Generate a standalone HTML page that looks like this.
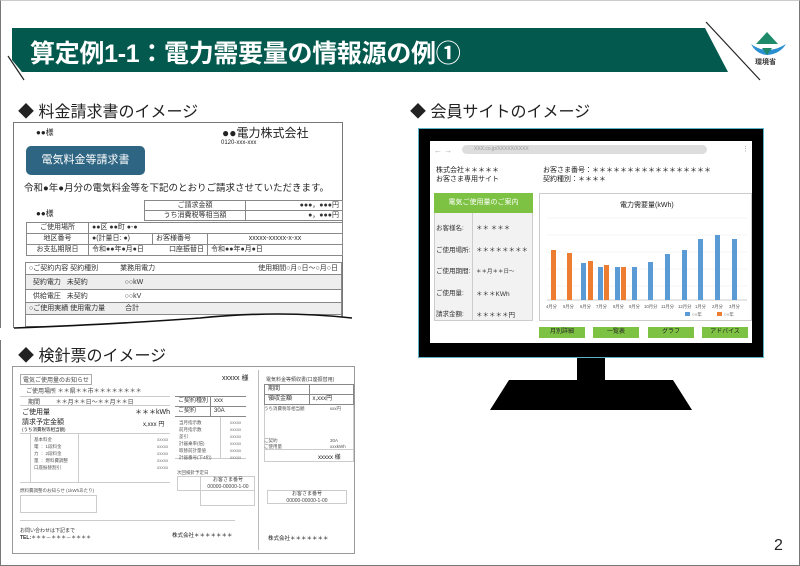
<!DOCTYPE html>
<html><head><meta charset="utf-8"><style>
*{margin:0;padding:0;box-sizing:border-box}
body{width:800px;height:566px;position:relative;overflow:hidden;background:#fff;font-family:"Liberation Sans","Noto Sans CJK JP",sans-serif;color:#222}
.a{position:absolute;white-space:nowrap}
.t{position:absolute;border-collapse:collapse;font-size:7px;color:#333;table-layout:fixed}
.t td{border:1px solid #888;padding:0 3px;height:10px;line-height:9px;white-space:nowrap;overflow:hidden}
.t2 td{height:11px;line-height:10px}
.s{font-size:6px;color:#444}
</style></head><body>
<div class="a" style="left:0;top:0;width:800px;height:566px;border:1px solid #777;border-top-color:#ccc"></div>
<!-- header -->
<svg class="a" style="left:0;top:0" width="800" height="90">
<polygon points="12,28 705,28 728,72 22,72 12,60" fill="#03594d"/>
<line x1="706" y1="22" x2="760" y2="80" stroke="#222" stroke-width="1.2"/>
<line x1="8" y1="56" x2="24" y2="80" stroke="#222" stroke-width="1.2"/>
<polygon points="767,32 778,44 756,44" fill="#1e8a6a"/>
<path d="M751,44 Q767,56 786,44 Q780,54 767,55 Q756,54 751,44Z" fill="#2a8fd0"/>
<path d="M762,48 L772,48 L767,55Z" fill="#1e8a6a"/>
</svg>
<div class="a" style="left:30px;top:34px;font-size:25px;font-weight:bold;color:#fff;letter-spacing:-0.3px">算定例1-1：電力需要量の情報源の例①</div>
<div class="a" style="left:755px;top:57px;font-size:7px;font-weight:bold;color:#333">環境省</div>
<div class="a" style="left:18px;top:98px;font-size:16px">◆ 料金請求書のイメージ</div>
<div class="a" style="left:410px;top:98px;font-size:16px">◆ 会員サイトのイメージ</div>
<div class="a" style="left:18px;top:342px;font-size:16px">◆ 検針票のイメージ</div>

<!-- bill -->
<div class="a" style="left:13px;top:122px;width:330px;height:210px;border:1px solid #777;border-bottom:none"></div>
<div class="a" style="left:36px;top:127px;font-size:8px">●●様</div>
<div class="a" style="left:222px;top:124px;font-size:12px">●●電力株式会社</div>
<div class="a" style="left:221px;top:140px;font-size:6px">0120-xxx-xxx</div>
<div class="a" style="left:26px;top:146px;width:119px;height:29px;background:#2e6583;border-radius:5px;color:#fff;font-size:11px;text-align:center;line-height:29px">電気料金等請求書</div>
<div class="a" style="left:24px;top:180px;font-size:9.5px">令和●年●月分の電気料金等を下記のとおりご請求させていただきます。</div>
<div class="a" style="left:36px;top:208px;font-size:8px">●●様</div>
<table class="t" style="left:144px;top:200px;width:199px"><tr><td style="text-align:center;width:101px">ご請求金額</td><td style="text-align:right">●●●，●●●円</td></tr><tr><td style="text-align:center">うち消費税等相当額</td><td style="text-align:right">●，●●●円</td></tr></table>
<table class="t t2" style="left:26px;top:222px;width:317px"><tr><td style="text-align:center;width:62px">ご使用場所</td><td style="width:64px;border-right:none">●●区 ●●町 ●-●</td><td style="width:55px;border-left:none;border-right:none"></td><td style="border-left:none"></td></tr><tr><td style="text-align:center">地区番号</td><td>●(計量日: ●)</td><td>お客様番号</td><td style="text-align:center">xxxxx-xxxxx-x-xx</td></tr><tr><td style="text-align:center">お支払期限日</td><td style="border-right:none">令和●●年●月●日</td><td style="border-left:none;text-align:right">口座振替日</td><td>令和●●年●月●日</td></tr></table>
<table class="t" style="left:25px;top:262px;width:317px"><tr><td style="height:12px">○ご契約内容 契約種別 <span style="margin-left:20px">業務用電力</span><span style="float:right">使用期間○月○日～○月○日</span></td></tr><tr style="background:#eee"><td style="height:15px">&nbsp;&nbsp;契約電力 &nbsp;&nbsp;未契約 <span style="margin-left:35px">○○kW</span></td></tr><tr><td style="height:13px">&nbsp;&nbsp;供給電圧 &nbsp;&nbsp;未契約 <span style="margin-left:35px">○○kV</span></td></tr><tr style="background:#eee"><td style="height:12px">○ご使用実績 使用電力量 <span style="margin-left:18px">合計</span></td></tr><tr><td style="height:12px"></td></tr></table>
<svg class="a" style="left:0;top:300px" width="360" height="40"><path d="M0,40 L0,28 L14,28 Q120,24 200,18 Q280,10 352,18 L360,18 L360,40Z" fill="#fff"/><path d="M14,28 Q120,24 200,18 Q280,10 352,18" stroke="#111" stroke-width="1.6" fill="none"/></svg>

<!-- monitor -->
<div class="a" style="left:418px;top:128px;width:346px;height:230px;background:#000;border:1px solid #5ab4c8"></div>
<div class="a" style="left:577px;top:358px;width:28px;height:22px;background:#000"></div>
<svg class="a" style="left:480px;top:379px" width="230" height="33"><polygon points="29,1 193,1 212,31 10,31" fill="#000"/></svg>
<div class="a" style="left:430px;top:141px;width:322px;height:202px;background:#fff"></div>
<div class="a" style="left:434px;top:146px;font-size:8px;color:#aaa">← →</div>
<div class="a" style="left:462px;top:145px;width:245px;height:9px;background:#ddd;border-radius:5px;font-size:5px;color:#999;padding-left:12px;line-height:9px">XXX.co.jp/XXXXX/XXXX</div>
<div class="a" style="left:742px;top:145px;font-size:7px;color:#999">⋮</div>
<div class="a" style="left:436px;top:166px;font-size:7px;line-height:9px">株式会社＊＊＊＊＊<br>お客さま専用サイト</div>
<div class="a" style="left:543px;top:166px;font-size:7px;line-height:9px">お客さま番号：＊＊＊＊＊＊＊＊＊＊＊＊＊＊＊＊＊<br>契約種別：＊＊＊＊</div>
<div class="a" style="left:434px;top:193px;width:99px;height:128px;border:1px solid #ccc;background:#f2f2f2"></div>
<div class="a" style="left:434px;top:193px;width:99px;height:20px;background:#7dc242;color:#fff;font-size:7px;text-align:center;line-height:20px">電気ご使用量のご案内</div>
<div class="a" style="left:472px;top:213px;width:1px;height:108px;background:#ccc"></div>
<div class="a" style="left:436px;top:218px;font-size:6.5px;line-height:21.5px;color:#333">お客様名:<br>ご使用場所:<br>ご使用期間:<br>ご使用量:<br>請求金額:</div>
<div class="a" style="left:476px;top:218px;font-size:6.5px;line-height:21.5px;color:#333">＊＊ ＊＊＊<br>＊＊＊＊＊＊＊＊<br><span style="font-size:5.5px">＊＊月＊＊日～</span><br>＊＊＊KWh<br>＊＊＊＊＊円</div>
<div class="a" style="left:539px;top:193px;width:213px;height:128px;border:1px solid #ccc"></div>
<div class="a" style="left:620px;top:200px;font-size:7px">電力需要量(kWh)</div>
<svg class="a" style="left:539px;top:212px" width="213" height="108">
<g stroke="#eee" stroke-width="0.6"><line x1="8" x2="208" y1="6" y2="6"/><line x1="8" x2="208" y1="23" y2="23"/><line x1="8" x2="208" y1="40" y2="40"/><line x1="8" x2="208" y1="57" y2="57"/><line x1="8" x2="208" y1="74" y2="74"/></g>
<line x1="8" x2="208" y1="88" y2="88" stroke="#ccc"/>
<g fill="#ed7d31"><rect x="12" y="38" width="5" height="50"/><rect x="28" y="41" width="5" height="47"/><rect x="49" y="49" width="5" height="39"/><rect x="65" y="53" width="5" height="35"/><rect x="82" y="55" width="5" height="33"/></g>
<g fill="#5b9bd5"><rect x="42" y="51" width="5" height="37"/><rect x="59" y="55" width="5" height="33"/><rect x="76" y="55" width="5" height="33"/><rect x="93" y="55" width="5" height="33"/><rect x="109" y="50" width="5" height="38"/><rect x="126" y="42" width="5" height="46"/><rect x="143" y="38" width="5" height="50"/><rect x="159" y="27" width="5" height="61"/><rect x="176" y="23" width="5" height="65"/><rect x="193" y="27" width="5" height="61"/></g>
<text y="96" font-size="4.3" fill="#555" font-family="Liberation Sans,Noto Sans CJK JP,sans-serif"><tspan x="7">4月分</tspan><tspan x="24">5月分</tspan><tspan x="41">6月分</tspan><tspan x="57">7月分</tspan><tspan x="74">8月分</tspan><tspan x="90">9月分</tspan><tspan x="105">10月分</tspan><tspan x="122">11月分</tspan><tspan x="139">12月分</tspan><tspan x="156">1月分</tspan><tspan x="173">2月分</tspan><tspan x="190">3月分</tspan></text>
<rect x="146" y="100" width="5" height="4" fill="#5b9bd5"/><text x="153" y="104" font-size="4.5" fill="#555">○○年</text>
<rect x="178" y="100" width="5" height="4" fill="#ed7d31"/><text x="185" y="104" font-size="4.5" fill="#555">○○年</text>
</svg>
<div class="a" style="left:539px;top:327px;width:46px;height:11px;background:#7dc242;font-size:6px;text-align:center;line-height:11px">月別詳細</div>
<div class="a" style="left:593px;top:327px;width:46px;height:11px;background:#7dc242;font-size:6px;text-align:center;line-height:11px">一覧表</div>
<div class="a" style="left:648px;top:327px;width:46px;height:11px;background:#7dc242;font-size:6px;text-align:center;line-height:11px">グラフ</div>
<div class="a" style="left:702px;top:327px;width:46px;height:11px;background:#7dc242;font-size:6px;text-align:center;line-height:11px">アドバイス</div>

<!-- meter ticket -->
<div class="a" style="left:12px;top:366px;width:343px;height:188px;border:1px solid #999"></div>
<div class="a" style="left:258px;top:370px;width:1px;height:180px;background:#bbb"></div>
<div class="a s" style="left:20px;top:374px;border:1px solid #aaa;padding:0 2px">電気ご使用量のお知らせ</div>
<div class="a" style="left:222px;top:373px;font-size:7px">xxxxx 様</div>
<div class="a s" style="left:26px;top:386px">ご使用場所 ＊＊県＊＊市＊＊＊＊＊＊＊＊</div>
<div class="a" style="left:20px;top:396px;width:150px;height:10px;border-top:1px solid #ccc;border-bottom:1px solid #ccc"></div>
<div class="a s" style="left:28px;top:397px">期間 <span style="margin-left:14px">＊＊月＊＊日～＊＊月＊＊日</span></div>
<div class="a" style="left:22px;top:407px;font-size:7px">ご使用量</div>
<div class="a" style="left:135px;top:407px;font-size:7px">＊＊＊kWh</div>
<table class="t" style="left:175px;top:396px;width:71px;font-size:6px"><tr><td style="border-left:none">ご契約種別</td><td style="border-right:none">xxx</td></tr><tr><td style="border-left:none">ご契約</td><td style="border-right:none">30A</td></tr></table>
<div class="a" style="left:22px;top:419px;font-size:7px;line-height:7px">請求予定金額<br><span style="font-size:4.5px">(うち消費税等相当額)</span></div>
<div class="a" style="left:143px;top:419px;font-size:6px">x,xxx 円</div>
<div class="a" style="left:20px;top:433px;width:150px;height:50px;border-top:1px solid #ccc;border-bottom:1px solid #ccc"></div>
<div class="a" style="left:30px;top:433px;width:1px;height:50px;background:#ccc"></div>
<div class="a" style="left:78px;top:433px;width:1px;height:50px;background:#ccc"></div>
<div class="a" style="left:34px;top:436px;font-size:4.5px;line-height:7px;color:#555">基本料金<br>電 ： 1段料金<br>力 ： 2段料金<br>量 ： 燃料費調整<br>口座振替割引</div>
<div class="a" style="left:157px;top:436px;font-size:4.5px;line-height:7px;color:#777">xxxxx<br>xxxxx<br>xxxxx<br>xxxxx<br>xxxxx</div>
<div class="a" style="left:175px;top:417px;width:71px;height:42px;border-bottom:1px solid #ccc"></div>
<div class="a" style="left:220px;top:417px;width:1px;height:42px;background:#ccc"></div>
<div class="a" style="left:179px;top:419px;font-size:4.5px;line-height:7px;color:#555">当月指示数<br>前月指示数<br>差引<br>計器乗率(倍)<br>取替前計量値<br>計器番号(下4桁)</div>
<div class="a" style="left:230px;top:419px;font-size:4.5px;line-height:7px;color:#777">xxxxx<br>xxxxx<br>xxxxx<br>xxxxx<br>xxxxx<br>xxxxx</div>
<div class="a" style="left:20px;top:488px;font-size:4.5px;color:#555">燃料費調整のお知らせ (1kWhあたり)</div>
<div class="a" style="left:20px;top:495px;width:77px;height:18px;border:1px solid #ccc"></div>
<div class="a" style="left:177px;top:470px;font-size:4.5px;color:#555">次回検針予定日</div>
<div class="a" style="left:177px;top:476px;width:78px;height:15px;border:1px solid #ccc"></div>
<div class="a" style="left:200px;top:476px;width:55px;height:30px;border-left:1px solid #ccc;border-right:1px solid #ccc;border-bottom:1px solid #ccc"></div>
<div class="a" style="left:202px;top:477px;font-size:5px;line-height:7px;text-align:center;width:52px;color:#444">お客さま番号<br>00000-00000-1-00</div>
<div class="a" style="left:20px;top:520px;width:215px;height:1px;background:#ccc"></div>
<div class="a" style="left:20px;top:528px;font-size:5px;line-height:7px;color:#333">お問い合わせは下記まで<br><b>TEL:</b>＊＊＊－＊＊＊－＊＊＊＊</div>
<div class="a" style="left:172px;top:531px;font-size:5.5px">株式会社＊＊＊＊＊＊＊</div>
<div class="a" style="left:266px;top:376px;font-size:5px;color:#444">電気料金等領収書(口座振替用)</div>
<table class="t" style="left:264px;top:384px;width:90px;font-size:6px"><tr><td style="height:10px">期間</td><td></td></tr><tr><td style="height:10px">領収金額</td><td>x,xxx円</td></tr></table>
<div class="a" style="left:264px;top:405px;width:90px;height:45px;border:1px solid #ccc;border-top:none"></div>
<div class="a" style="left:264px;top:406px;font-size:4.5px;color:#555">うち消費税等相当額 <span style="margin-left:24px">xxx円</span></div>
<div class="a" style="left:264px;top:438px;font-size:4.5px;line-height:6px;color:#555">ご契約<br>ご使用量</div>
<div class="a" style="left:330px;top:438px;font-size:4.5px;line-height:6px;color:#555">30A<br>xxxkWh</div>
<div class="a" style="left:264px;top:450px;width:90px;height:12px;border:1px solid #ccc;border-top:none"></div>
<div class="a" style="left:318px;top:452px;font-size:6px">xxxxx 様</div>
<div class="a" style="left:267px;top:490px;width:80px;height:14px;border:1px solid #ccc;font-size:5px;line-height:6.5px;text-align:center;color:#444">お客さま番号<br>00000-00000-1-00</div>
<div class="a" style="left:268px;top:534px;font-size:5.5px">株式会社＊＊＊＊＊＊＊</div>

<div class="a" style="left:774px;top:537px;font-size:16px">2</div>
</body></html>
